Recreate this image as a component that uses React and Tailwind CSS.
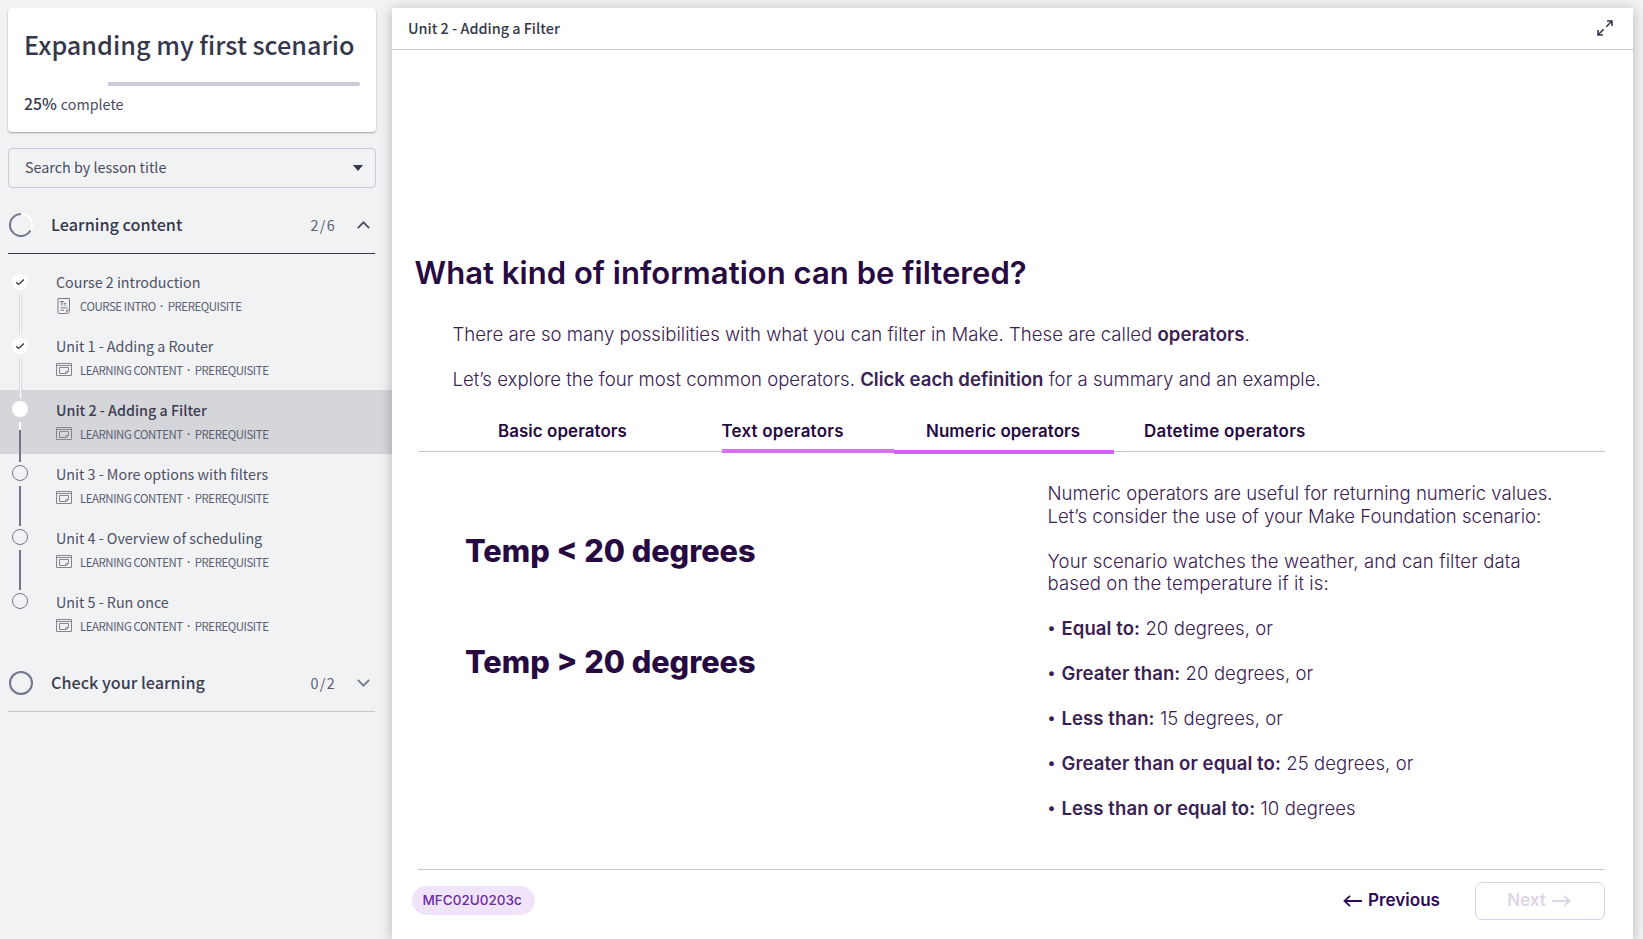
import React from "react";

const lessons = [
  { title: "Course 2 introduction", kind: "COURSE INTRO", state: "done" },
  { title: "Unit 1 - Adding a Router", kind: "LEARNING CONTENT", state: "done" },
  { title: "Unit 2 - Adding a Filter", kind: "LEARNING CONTENT", state: "current" },
  { title: "Unit 3 - More options with filters", kind: "LEARNING CONTENT", state: "todo" },
  { title: "Unit 4 - Overview of scheduling", kind: "LEARNING CONTENT", state: "todo" },
  { title: "Unit 5 - Run once", kind: "LEARNING CONTENT", state: "todo", last: true },
];

const conditions = [
  ["Equal to:", "20 degrees, or"],
  ["Greater than:", "20 degrees, or"],
  ["Less than:", "15 degrees, or"],
  ["Greater than or equal to:", "25 degrees, or"],
  ["Less than or equal to:", "10 degrees"],
];

function PageIcon() {
  return (
    <svg className="h-4 w-4" viewBox="0 0 16 16" fill="none" stroke="#767989">
      <path d="M2 .5h11.5V11l-4 4.5H3a1 1 0 0 1-1-1z" strokeWidth="1" />
      <path d="M13.5 12h-3v3.5M13.5 11v2.5a2 2 0 0 1-2 2h-2" stroke="#a08a92" strokeWidth=".9" />
      <path d="M3.8 3.5h4M5.8 3.5V7.5M7.8 5l2.2 2.4M10 5L7.8 7.4" strokeWidth="1.1" />
      <path d="M4.5 9.8h7M4.5 12.2h3.5" strokeWidth="1" />
    </svg>
  );
}

function WindowIcon() {
  return (
    <svg className="h-4 w-4" viewBox="0 0 16 16" fill="none" stroke="#85878f">
      <path d="M.5 1.5h15v12H.5zM.5 3.5h15" />
      <path d="M3.5 5.5h9v3.6l-1.8 2.4H3.5z" />
      <path d="M12.5 9.5h-2.6v2" />
    </svg>
  );
}

function Connector({ state }) {
  if (state === "done")
    return <div className="ml-[19px] h-10 w-[3px] shrink-0 border-x border-[#d9dadd] bg-white" />;
  if (state === "current")
    return (
      <div className="ml-[19px] h-10 w-[3px] shrink-0">
        <div className="h-2 w-[2px] bg-white" />
        <div className="h-8 w-[2px] bg-[#72758a]" />
      </div>
    );
  return <div className="ml-[19px] h-10 w-[2px] shrink-0 bg-[#72758a]" />;
}

function Marker({ state }) {
  if (state === "todo")
    return <div className="ml-3 h-4 w-4 shrink-0 rounded-full border border-[#72758a]" />;
  return (
    <div className="ml-3 flex h-4 w-4 shrink-0 items-center justify-center rounded-full bg-white">
      {state === "done" && (
        <svg className="h-4 w-4" viewBox="0 0 16 16" fill="none" stroke="#33363d" strokeWidth="1.4">
          <path d="M4.2 8.2l2.4 2.2L12 5.6" />
        </svg>
      )}
    </div>
  );
}

function Lesson({ title, kind, state, last }) {
  const current = state === "current";
  const intro = kind === "COURSE INTRO";
  return (
    <li className={`flex h-16 ${current ? "bg-[#d5d6da]" : ""}`}>
      <div className={`flex w-14 shrink-0 flex-col ${state === "done" ? "gap-1 pt-3" : "gap-[5px] pt-[11px]"}`}>
        <Marker state={state} />
        {!last && <div className="relative z-10"><Connector state={state} /></div>}
      </div>
      <div className="flex flex-col pt-2.5 whitespace-nowrap">
        <div className={`h-5 text-[14.3px] leading-5 ${current ? "font-medium text-[#3b3d52]" : "text-[#4e5065]"}`}>{title}</div>
        <div className="mt-1 flex h-5 items-center text-[11.4px] leading-5 tracking-[-0.42px] text-[#5b5d72]">
          {intro ? <PageIcon /> : <WindowIcon />}
          <span className="ml-2">{kind}</span>
          <span className="w-[12px] text-center font-['Liberation_Sans'] font-bold">·</span>
          <span>PREREQUISITE</span>
        </div>
      </div>
    </li>
  );
}

function Sidebar() {
  return (
    <aside className="flex w-[392px] shrink-0 flex-col pt-2">
      <div className="mx-2 h-[124px] w-[368px] rounded bg-white px-4 pt-5 shadow-[0_1px_2px_rgba(0,0,0,0.35)]">
        <h1 className="h-8 text-[25.2px] leading-8 font-medium whitespace-nowrap text-[#35374a]">Expanding my first scenario</h1>
        <div className="mt-[22px] flex h-1">
          <div className="w-[84px] bg-white" />
          <div className="w-[252px] rounded-r-full bg-[#cacbd6]" />
        </div>
        <div className="mt-[8px] flex h-5 items-baseline gap-1 leading-5 text-[#4a4c5e]">
          <span className="text-[15.8px] font-medium text-[#35374a]">25%</span>
          <span className="text-[14.3px]">complete</span>
        </div>
      </div>
      <div className="mx-2 mt-4 flex h-10 w-[368px] items-center justify-between rounded border border-[#cacbd6] pr-3 pl-4 text-[14.35px] leading-5 text-[#4a4c5e]">
        <span className="-mt-[2px]">Search by lesson title</span>
        <svg className="h-[6px] w-[10px]" viewBox="0 0 10 6"><path d="M0 0h10L5 6z" fill="#35374a" /></svg>
      </div>
      <div className="mx-2 flex h-[66px] w-[367px] items-center border-b border-[#35374a] pt-[9px]">
        <svg className="ml-[1px] h-6 w-6" viewBox="0 0 24 24" fill="none">
          <path d="M12 1a11 11 0 0 1 9.5 16.5" stroke="#fff" strokeWidth="2" />
          <path d="M12 1A11 11 0 1 0 21.5 17.5" stroke="#72758a" strokeWidth="2" />
        </svg>
        <span className="-mt-[2px] ml-[18px] w-[259.5px] text-[16.2px] leading-6 font-medium text-[#35374a]">Learning content</span>
        <span className="w-[46px] text-[14.3px] leading-6 tracking-[1.3px] text-[#5b5d72]">2/6</span>
        <svg className="h-2 w-[13px]" viewBox="0 0 13 8" fill="none"><path d="M.8 7.2L6.5 1.3l5.7 5.9" stroke="#4b4d60" strokeWidth="1.7" /></svg>
      </div>
      <ul className="mt-2">
        {lessons.map((l) => <Lesson key={l.title} {...l} />)}
      </ul>
      <div className="mx-2 flex h-[66px] w-[367px] items-center border-b border-[#c6c8cc] pt-[9px]">
        <div className="ml-[1px] h-6 w-6 rounded-full border-2 border-[#72758a]" />
        <span className="-mt-[2px] ml-[18px] w-[259.5px] text-[16.2px] leading-6 font-medium text-[#3b3d52]">Check your learning</span>
        <span className="w-[46px] text-[14.3px] leading-6 tracking-[1.3px] text-[#5b5d72]">0/2</span>
        <svg className="h-2 w-[13px]" viewBox="0 0 13 8" fill="none"><path d="M.8.8l5.7 5.9L12.2.8" stroke="#72758a" strokeWidth="1.7" /></svg>
      </div>
    </aside>
  );
}

function Tabs() {
  return (
    <div className="ml-[26px] w-[1187px]">
      <div className="flex h-[30px] pt-[1px] text-[16.9px] leading-5 font-semibold whitespace-nowrap text-[#270a41]">
        <span className="ml-[80px] w-[223.5px] tracking-[0.08px]">Basic operators</span>
        <span className="w-[204.5px] tracking-[0.25px]">Text operators</span>
        <span className="w-[218px] tracking-[0.08px]">Numeric operators</span>
        <span className="tracking-[0.28px]">Datetime operators</span>
      </div>
      <div className="flex h-1 items-center">
        <div className="h-px w-[304px] bg-[#cfc6cd]" />
        <div className="-mt-px h-1 w-[171.5px] bg-[#d96ffb]" />
        <div className="h-1 w-[220.5px] bg-[#d360fb]" />
        <div className="h-px flex-1 bg-[#cfc6cd]" />
      </div>
    </div>
  );
}

function Slide() {
  return (
    <section className="flex flex-1 flex-col font-['Inter'] text-[#3a2152]">
      <h2 className="mt-[203px] ml-[22.5px] h-10 text-[31px] leading-10 font-semibold tracking-[0.04px] whitespace-nowrap text-[#270a41]">What kind of information can be filtered?</h2>
      <p className="mt-[28.5px] ml-[60.5px] h-6 text-[18.6px] leading-6 font-light whitespace-nowrap">
        There are so many possibilities with what you can filter in Make. These are called <b className="font-semibold">operators</b>.
      </p>
      <p className="mt-[21px] ml-[60.5px] h-6 text-[18.59px] leading-6 font-light whitespace-nowrap">
        Let’s explore the four most common operators. <b className="font-semibold">Click each definition</b> for a summary and an example.
      </p>
      <div className="mt-[29px]"><Tabs /></div>
      <div className="mt-[28.5px] flex h-[386.5px] leading-[22.5px]">
        <div className="ml-[73px] w-[582.5px] text-[30.66px] leading-[40px] font-extrabold text-[#270a41]">
          <div className="mt-[48.5px]">Temp &lt; 20 degrees</div>
          <div className="mt-[71px]">Temp &gt; 20 degrees</div>
        </div>
        <div className="text-[18.55px] font-light whitespace-nowrap">
          <p>
            Numeric operators are useful for returning numeric values.<br />
            <span className="tracking-[0.03px]">Let’s consider the use of your Make Foundation scenario:</span>
          </p>
          <p className="mt-[22.5px] tracking-[0.11px]">Your scenario watches the weather, and can filter data<br />based on the temperature if it is:</p>
          <ul className="mt-[22.5px] flex flex-col gap-[22.5px]">
            {conditions.map(([name, value]) => (
              <li key={name} className="flex">
                <span className="w-[14px] text-[15px] font-medium">•</span>
                <span className="tracking-[0.08px]"><b className="font-semibold">{name}</b> {value}</span>
              </li>
            ))}
          </ul>
        </div>
      </div>
      <div className="ml-[26px] w-[1187px] border-t border-[#cfc6cd]" />
      <div className="mt-[12px] ml-5 flex h-[38px] w-[1193px] items-center">
        <span className="flex h-[29px] w-[123px] items-center rounded-full bg-[#f0e4fb] pl-[10.5px] text-[13.5px] font-medium text-[#6f2aa0]">MFC02U0203c</span>
        <div className="ml-auto flex items-center gap-[6px] text-[17.1px] font-semibold text-[#2d0a56]">
          <svg className="h-3 w-[19px]" viewBox="0 0 19 12" fill="none" stroke="#2d0a56" strokeWidth="1.8"><path d="M19 6H1.5M7 .8L1.5 6 7 11.2" /></svg>
          <span className="-mt-px leading-6">Previous</span>
        </div>
        <div className="ml-[35px] flex h-[38px] w-[130px] items-center justify-center gap-[6px] rounded-[7px] border border-[#d9d0e6] pr-[2px] text-[17px] font-semibold text-[#ded5e8]">
          <span className="-mt-px leading-6">Next</span>
          <svg className="h-3 w-[19px]" viewBox="0 0 19 12" fill="none" stroke="#ded5e8" strokeWidth="1.8"><path d="M0 6h17.5M12 .8L17.5 6 12 11.2" /></svg>
        </div>
      </div>
    </section>
  );
}

export default function App() {
  return (
    <div className="flex h-[939px] w-[1643px] overflow-hidden bg-[#f1f2f4] font-['Noto_Sans_CJK_SC',sans-serif]">
      <Sidebar />
      <main className="relative z-20 mt-2 flex w-[1241px] shrink-0 flex-col bg-white shadow-[0_2px_12px_rgba(0,0,0,0.25)]">
        <header className="flex h-[42px] items-center justify-between border-b border-[#cacbd0] pr-5 pl-4">
          <span className="-mt-[2px] text-[14.4px] leading-5 font-medium text-[#35374a]">Unit 2 - Adding a Filter</span>
          <svg className="-mt-px h-4 w-4" viewBox="0 0 16 16" fill="none" stroke="#35374a" strokeWidth="1.6">
            <path d="M9.3 6.7L15 1M10 1h5v5M6.7 9.3L1 15M1 10v5h5" />
          </svg>
        </header>
        <Slide />
      </main>
    </div>
  );
}
